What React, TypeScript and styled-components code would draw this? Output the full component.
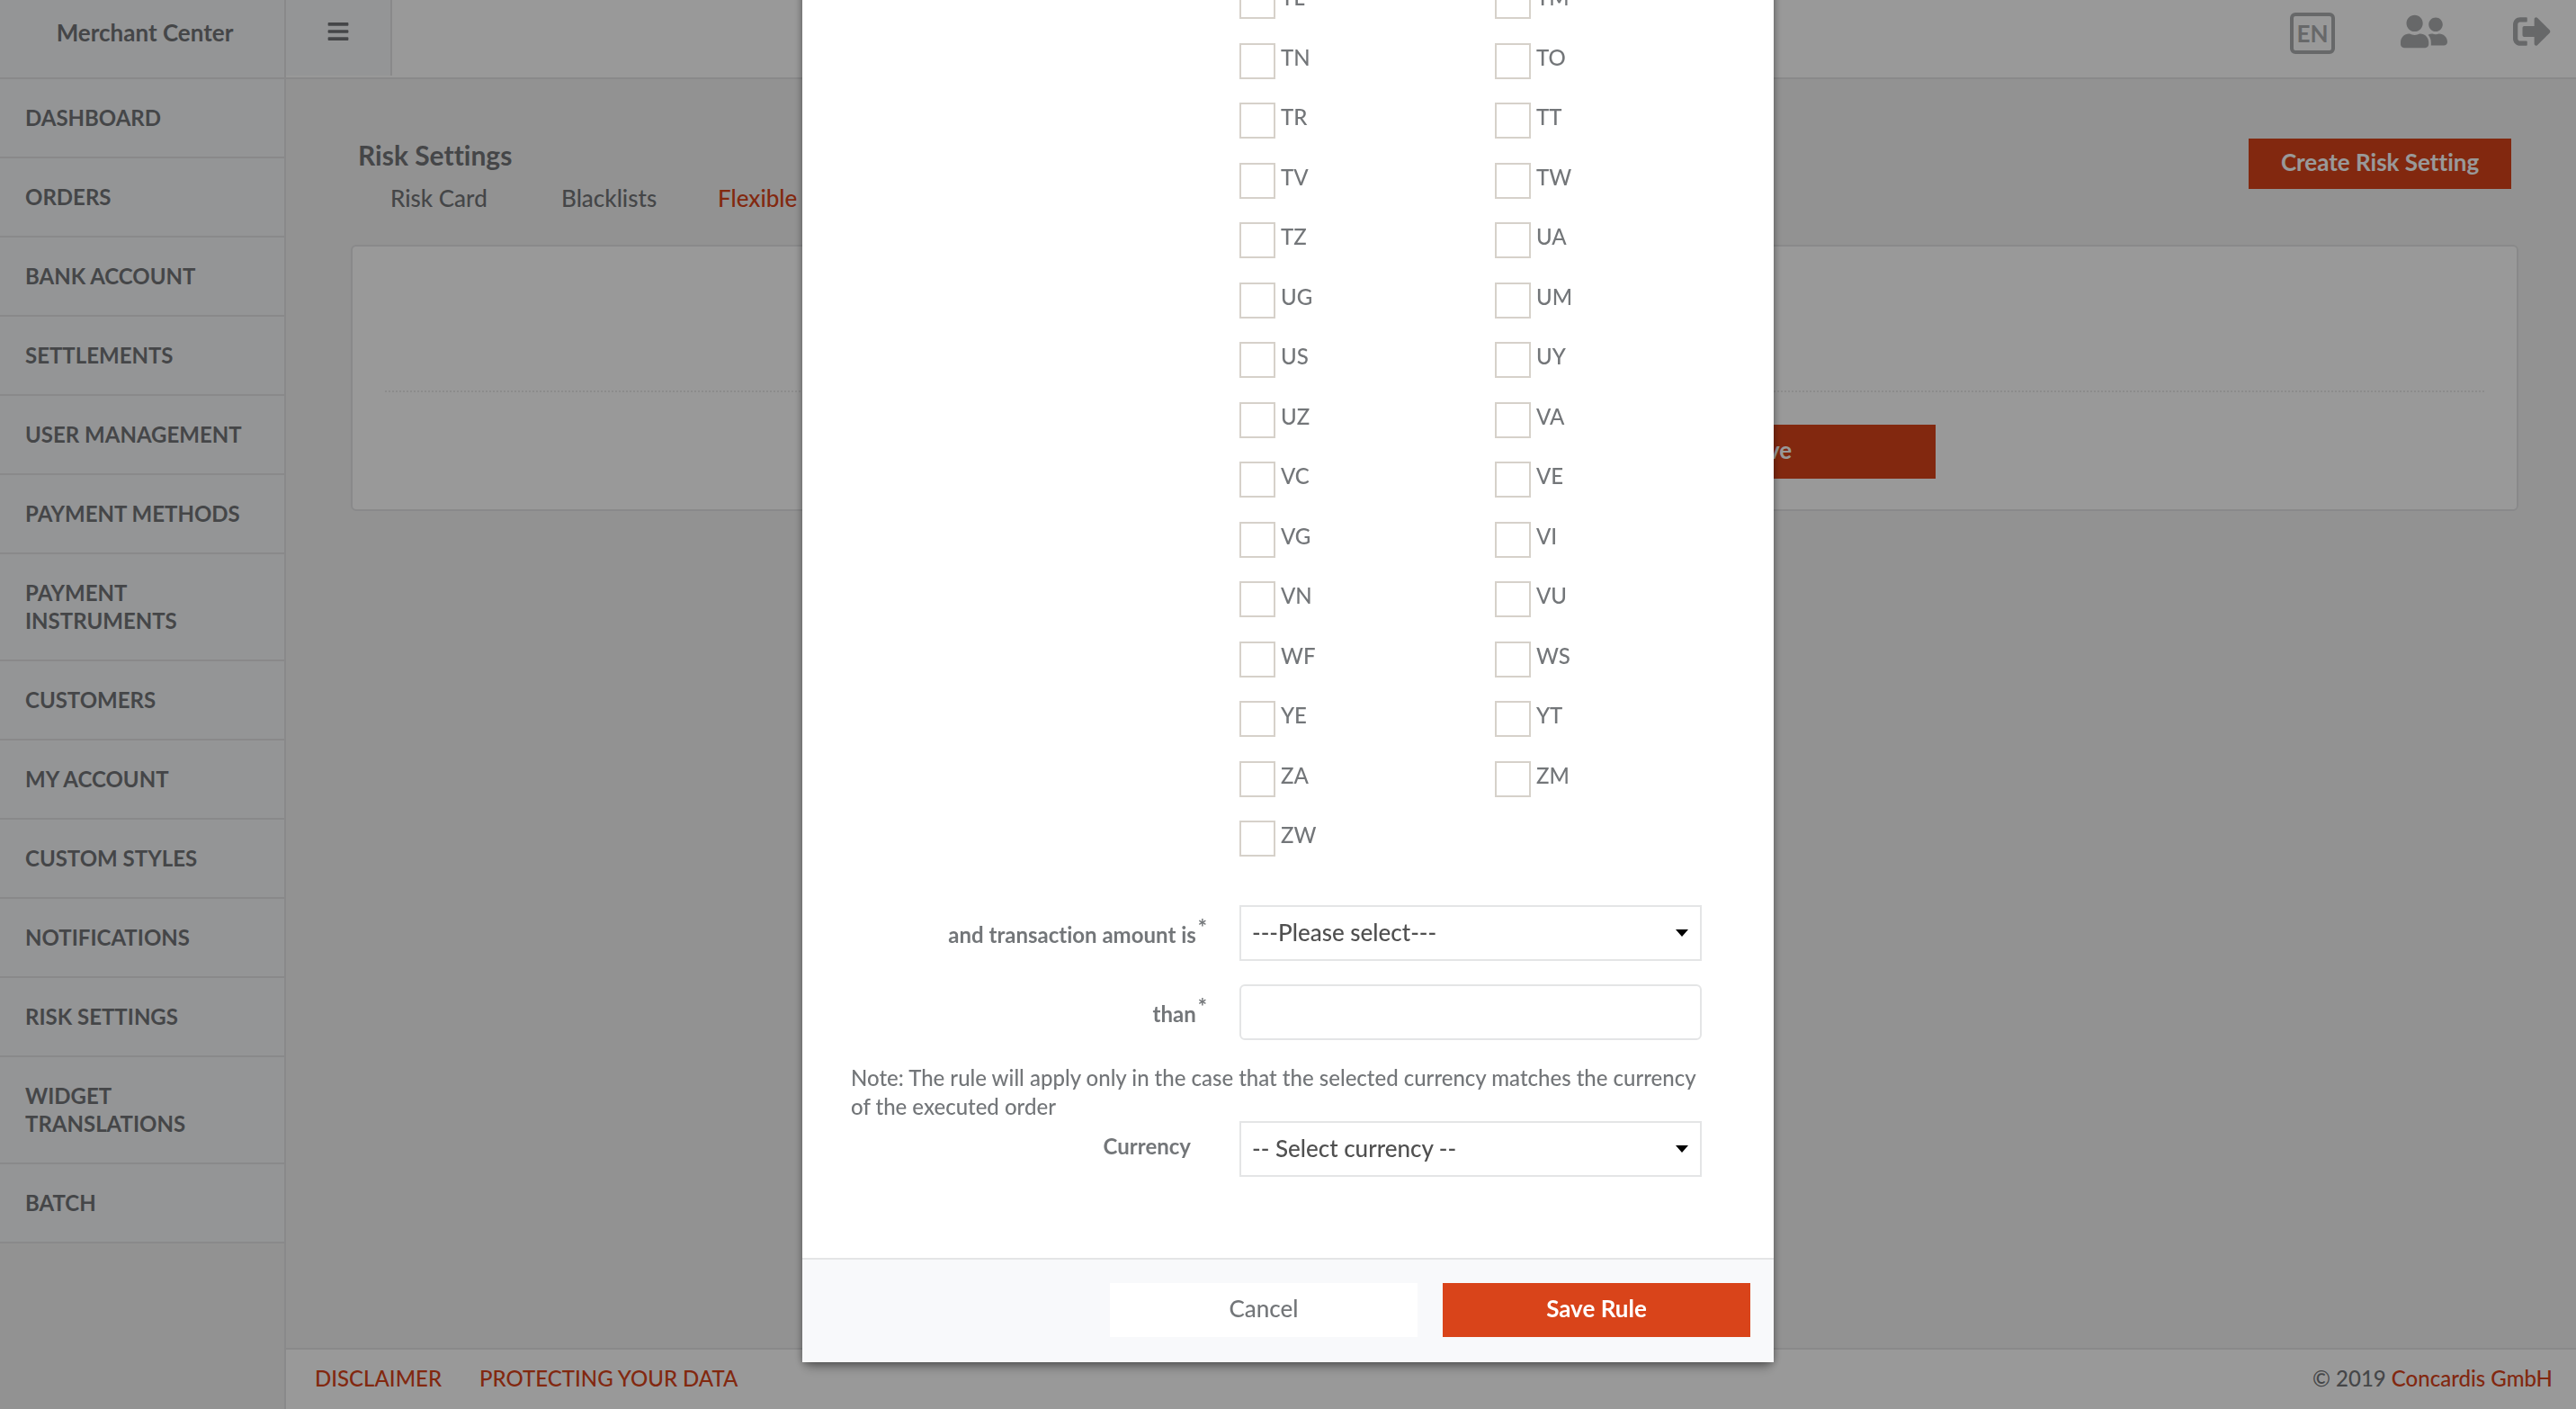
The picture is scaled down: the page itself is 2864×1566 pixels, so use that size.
import React, { useState } from 'react';
import styled, { createGlobalStyle, css } from 'styled-components';
import { FaBars, FaSignOutAlt, FaUserFriends } from 'react-icons/fa';

const GlobalStyle = createGlobalStyle`
  *, *::before, *::after { box-sizing: border-box; }
  body {
    margin: 0;
    overflow: hidden;
    background: #f4f4f4;
    color: #737679;
    font: 500 24px/32px Lato, "Liberation Sans", sans-serif;
    font-variant-ligatures: none;
  }
  button, input, select { font: inherit; color: inherit; font-variant-ligatures: none; }
  a { text-decoration: none; }
`;

const border = '2px solid #e4e5e6';
const red = '#d9441a';

const Page = styled.div`
  display: grid;
  grid-template: 88px 1fr 68px / 318px 1fr;
  grid-template-areas: 'brand top' 'side main' 'side foot';
  height: 100vh;
`;

const Brand = styled.div`
  grid-area: brand;
  padding: 20px 0 0 6px;
  border-right: ${border};
  border-bottom: ${border};
  background: #f7f9fb;
  font-size: 26px;
  font-weight: 700;
  text-align: center;
`;

const TopBar = styled.header`
  grid-area: top;
  display: flex;
  justify-content: space-between;
  background: #fff;
  border-bottom: ${border};
`;

const MenuButton = styled.button`
  width: 118px;
  height: 84px;
  padding: 0 0 14px;
  border: 0;
  border-right: ${border};
  background: #f7f9fb;
  font-size: 26px;
  line-height: 26px;
  svg { display: block; margin: 0 auto; }
`;

const TopActions = styled.div`
  display: flex;
  align-items: center;
  gap: 73px;
  padding: 0 28px 12px 0;
  color: #acaeb0;
`;

const IconButton = styled.button<{ $width: number }>`
  display: flex;
  padding: 0 0 4px;
  border: 0;
  background: none;
  color: inherit;
  svg { width: ${p => p.$width}px; height: 42px; }
`;

const Language = styled.button`
  width: 50px;
  height: 46px;
  padding: 0;
  border: 4px solid;
  border-radius: 6px;
  background: none;
  color: inherit;
  font-size: 26px;
  font-weight: 700;
  line-height: 32px;
`;

const Sidebar = styled.nav`
  grid-area: side;
  border-right: ${border};
`;

const NavLink = styled.a`
  display: block;
  padding: 27px 40px 28px 28px;
  border-bottom: ${border};
  background: #f7f9fb;
  color: inherit;
  font-weight: 700;
  line-height: 31px;
  text-transform: uppercase;
`;

const Main = styled.main`
  grid-area: main;
  padding: 66px 64px 0 72px;
`;

const Heading = styled.div`
  display: flex;
  justify-content: space-between;
  align-items: flex-start;
  padding: 0 8px;
`;

const Title = styled.h1`
  margin: 0 0 14px;
  font-size: 30px;
  font-weight: 700;
  line-height: 36px;
`;

const Tabs = styled.div`
  display: grid;
  grid-template-columns: 190px 174px auto;
  padding-left: 36px;
`;

const Tab = styled.a<{ $active?: boolean }>`
  font-size: 26px;
  color: ${p => (p.$active ? red : 'inherit')};
`;

const Button = styled.button<{ $plain?: boolean }>`
  height: 60px;
  padding: 0 0 4px;
  border: 0;
  background: ${p => (p.$plain ? '#fff' : red)};
  color: ${p => (p.$plain ? '#737679' : '#fff')};
  font-size: 26px;
  font-weight: ${p => (p.$plain ? 500 : 700)};
`;

const CreateButton = styled(Button)`
  width: 292px;
  height: 56px;
`;

const Card = styled.section`
  margin-top: 36px;
  padding: 160px 36px 34px;
  border: ${border};
  border-radius: 6px;
  background: #fff;
`;

const CardActions = styled.div`
  display: flex;
  justify-content: flex-end;
  padding: 36px 610px 0 0;
  border-top: 2px dotted #e9e9e9;
  ${Button} { width: 374px; }
`;

const Footer = styled.footer`
  grid-area: foot;
  display: flex;
  gap: 42px;
  padding: 16px 26px 0 32px;
  border-top: ${border};
  background: #fff;
`;

const FooterLink = styled.a`
  color: ${red};
`;

const Copyright = styled.span`
  margin-left: auto;
`;

const Backdrop = styled.div`
  position: fixed;
  inset: 0;
  display: flex;
  justify-content: center;
  align-items: flex-end;
  padding-bottom: 52px;
  overflow: hidden;
  background: rgba(0, 0, 0, 0.4);
`;

const Dialog = styled.form`
  width: 1080px;
  flex: none;
  background: #fff;
  box-shadow: 0 8px 12px -4px rgba(0, 0, 0, 0.4), 0 0 8px rgba(0, 0, 0, 0.3);
`;

const DialogBody = styled.div`
  display: grid;
  grid-template-columns: 410px 514px;
  column-gap: 22px;
  padding: 30px 80px 90px 54px;
`;

const Countries = styled.fieldset`
  grid-column: 2;
  display: grid;
  grid-template-columns: 284px 1fr;
  grid-auto-rows: 67px 66px;
  margin: 0 0 27px;
  padding: 0;
  border: 0;
`;

const Country = styled.label`
  display: flex;
  align-items: flex-start;
  gap: 6px;
`;

const CheckBox = styled.input`
  appearance: none;
  width: 40px;
  height: 40px;
  margin: 0;
  border: 2px solid #d6d1ca;
  background: #fff;
  &:checked { background: ${red}; }
`;

const FieldLabel = styled.label<{ $required?: boolean }>`
  padding: ${p => (p.$required ? '17px 14px 0 0' : '12px 32px 0 0')};
  font-weight: 700;
  text-align: right;
  ${p => p.$required && css`
    &::after { content: '*'; position: relative; top: -8px; margin-left: 2px; }
  `}
`;

const control = css`
  width: 100%;
  height: 62px;
  padding: 0 12px 2px;
  border: ${border};
  background: #fff;
  color: #505050;
  font-size: 26px;
`;

const TextInput = styled.input`
  ${control}
  border-radius: 6px;
`;

const SelectBox = styled.div`
  display: grid;
  align-items: center;
  > * { grid-area: 1 / 1; }
  svg { justify-self: end; margin-right: 15px; pointer-events: none; }
`;

const Select = styled.select`
  ${control}
  appearance: none;
  border-radius: 0;
`;

const Note = styled.p`
  grid-column: 1 / -1;
  margin: 26px 0 0;
`;

const Spacer = styled.div`
  grid-column: 1 / -1;
  height: 26px;
`;

const DialogFooter = styled.div`
  display: flex;
  justify-content: flex-end;
  gap: 28px;
  padding: 26px 26px 28px;
  border-top: ${border};
  background: #f8f9fb;
  ${Button} { width: 342px; }
`;

const navItems = [
  'Dashboard', 'Orders', 'Bank Account', 'Settlements', 'User Management', 'Payment Methods',
  'Payment Instruments', 'Customers', 'My Account', 'Custom Styles', 'Notifications',
  'Risk Settings', 'Widget Translations', 'Batch',
];

const countries = [
  'TL', 'TM', 'TN', 'TO', 'TR', 'TT', 'TV', 'TW', 'TZ', 'UA', 'UG', 'UM', 'US', 'UY', 'UZ', 'VA',
  'VC', 'VE', 'VG', 'VI', 'VN', 'VU', 'WF', 'WS', 'YE', 'YT', 'ZA', 'ZM', 'ZW',
];

function DropDown({ id, placeholder }: { id: string; placeholder: string }) {
  return (
    <SelectBox>
      <Select id={id}>
        <option>{placeholder}</option>
      </Select>
      <svg width="14" height="8" viewBox="0 0 14 8" aria-hidden="true">
        <path d="M0 0h14L7 8z" fill="#000" />
      </svg>
    </SelectBox>
  );
}

export default function App() {
  const [amount, setAmount] = useState('');
  return (
    <>
      <GlobalStyle />
      <Page>
        <Brand>Merchant Center</Brand>
        <TopBar>
          <MenuButton type="button" aria-label="Menu"><FaBars /></MenuButton>
          <TopActions>
            <Language type="button">EN</Language>
            <IconButton type="button" aria-label="Users" $width={52}><FaUserFriends /></IconButton>
            <IconButton type="button" aria-label="Sign out" $width={42}><FaSignOutAlt /></IconButton>
          </TopActions>
        </TopBar>
        <Sidebar>
          {navItems.map(item => <NavLink href="#" key={item}>{item}</NavLink>)}
        </Sidebar>
        <Main>
          <Heading>
            <div>
              <Title>Risk Settings</Title>
              <Tabs>
                <Tab href="#">Risk Card</Tab>
                <Tab href="#">Blacklists</Tab>
                <Tab href="#" $active>Flexible</Tab>
              </Tabs>
            </div>
            <CreateButton type="button">Create Risk Setting</CreateButton>
          </Heading>
          <Card>
            <CardActions><Button type="button">Save</Button></CardActions>
          </Card>
        </Main>
        <Footer>
          <FooterLink href="#">DISCLAIMER</FooterLink>
          <FooterLink href="#">PROTECTING YOUR DATA</FooterLink>
          <Copyright>© 2019 <FooterLink href="#">Concardis GmbH</FooterLink></Copyright>
        </Footer>
      </Page>
      <Backdrop>
        <Dialog role="dialog" onSubmit={e => e.preventDefault()}>
          <DialogBody>
            <Countries>
              {countries.map(code => (
                <Country key={code}><CheckBox type="checkbox" />{code}</Country>
              ))}
            </Countries>
            <FieldLabel htmlFor="comparison" $required>and transaction amount is</FieldLabel>
            <DropDown id="comparison" placeholder="---Please select---" />
            <Spacer />
            <FieldLabel htmlFor="amount" $required>than</FieldLabel>
            <TextInput id="amount" value={amount} onChange={e => setAmount(e.target.value)} />
            <Note>
              Note: The rule will apply only in the case that the selected currency matches the currency of the
              executed order
            </Note>
            <FieldLabel htmlFor="currency">Currency</FieldLabel>
            <DropDown id="currency" placeholder="-- Select currency --" />
          </DialogBody>
          <DialogFooter>
            <Button type="button" $plain>Cancel</Button>
            <Button type="submit">Save Rule</Button>
          </DialogFooter>
        </Dialog>
      </Backdrop>
    </>
  );
}
